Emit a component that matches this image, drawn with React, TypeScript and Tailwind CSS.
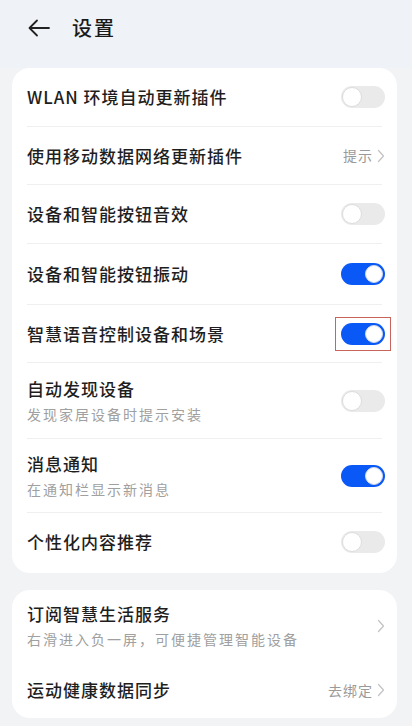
import React from "react";

function Toggle({ on }: { on: boolean }) {
  return on ? (
    <div className="w-[44px] h-[22px] rounded-full bg-[#0a59f7] flex items-center justify-end px-[2px]">
      <div className="w-[18px] h-[18px] rounded-full bg-white border border-[#cfd8e8]" />
    </div>
  ) : (
    <div className="w-[44px] h-[22px] rounded-full bg-[#eaeaea] flex items-center justify-start px-[1px]">
      <div className="w-[20px] h-[20px] rounded-full bg-white border border-[#dcdcdc]" />
    </div>
  );
}

function Chevron() {
  return (
    <svg width="8" height="14" viewBox="0 0 8 14" fill="none" className="ml-[4px]">
      <path d="M1.5 1.5 L6.5 7 L1.5 12.5" stroke="#c4c4c4" strokeWidth="1.3" strokeLinecap="round" strokeLinejoin="round" />
    </svg>
  );
}

type Row = {
  title: string;
  sub?: string;
  h: string;
  right: "on" | "off" | "chev" | string;
  mark?: boolean;
};

const rows1: Row[] = [
  { title: "WLAN 环境自动更新插件", h: "h-[58px]", right: "off" },
  { title: "使用移动数据网络更新插件", h: "h-[57px]", right: "提示" },
  { title: "设备和智能按钮音效", h: "h-[58px]", right: "off" },
  { title: "设备和智能按钮振动", h: "h-[60px]", right: "on" },
  { title: "智慧语音控制设备和场景", h: "h-[57px]", right: "on", mark: true },
  { title: "自动发现设备", sub: "发现家居设备时提示安装", h: "h-[75px]", right: "off" },
  { title: "消息通知", sub: "在通知栏显示新消息", h: "h-[73px]", right: "on" },
  { title: "个性化内容推荐", h: "h-[58px]", right: "off" },
];

const rows2: Row[] = [
  { title: "订阅智慧生活服务", sub: "右滑进入负一屏，可便捷管理智能设备", h: "h-[72px]", right: "chev" },
  { title: "运动健康数据同步", h: "h-[56px]", right: "去绑定" },
];

function RightPart({ r }: { r: Row }) {
  if (r.right === "on" || r.right === "off") {
    const t = <Toggle on={r.right === "on"} />;
    if (r.mark)
      return (
        <div className="border border-[#c9645c] px-[5px] py-[5px] -mr-[6px]">{t}</div>
      );
    return t;
  }
  if (r.right === "chev") return <Chevron />;
  return (
    <div className="flex items-center text-[14px] tracking-[1px] text-[#9a9a9a]">
      <span>{r.right}</span>
      <Chevron />
    </div>
  );
}

function Card({ rows, className }: { rows: Row[]; className?: string }) {
  return (
    <div className={"bg-white rounded-[18px] px-[15px] " + (className ?? "")}>
      {rows.map((r, i) => (
        <div key={r.title}>
          {i > 0 && r.right !== "去绑定" && <div className="h-px bg-[#efefef]" />}
          <div className={"flex items-center justify-between " + r.h}>
            <div className="flex flex-col">
              <span className="text-[17px] leading-[22px] tracking-[1px] font-medium text-[#1e1e1e]">{r.title}</span>
              {r.sub && (
                <span className="text-[14px] leading-[20px] tracking-[2px] text-[#a0a0a0] mt-[4px]">{r.sub}</span>
              )}
            </div>
            <div className="mr-[-3px]">
              <RightPart r={r} />
            </div>
          </div>
        </div>
      ))}
    </div>
  );
}

export default function App() {
  return (
    <div
      className="w-[412px] h-[726px] overflow-hidden bg-[#f1f3f5]"
      style={{ fontFamily: '"Noto Sans CJK SC", "Noto Sans", sans-serif' }}
    >
      <div className="h-[68px] flex items-start pt-[14px] pl-[26px] gap-[20px] bg-[#eff2f6]">
        <svg width="26" height="26" viewBox="0 0 26 26" fill="none" className="mt-[1px]">
          <path d="M23 13 H4 M11 5.5 L3.5 13 L11 20.5" stroke="#222" strokeWidth="1.8" strokeLinecap="round" strokeLinejoin="round" />
        </svg>
        <span className="text-[20px] leading-[28px] tracking-[2px] font-medium text-[#1a1a1a]">设置</span>
      </div>
      <div className="pl-[12px] pr-[15px]">
        <Card rows={rows1} className="pb-[2px]" />
        <Card rows={rows2} className="mt-[17px]" />
      </div>
    </div>
  );
}
